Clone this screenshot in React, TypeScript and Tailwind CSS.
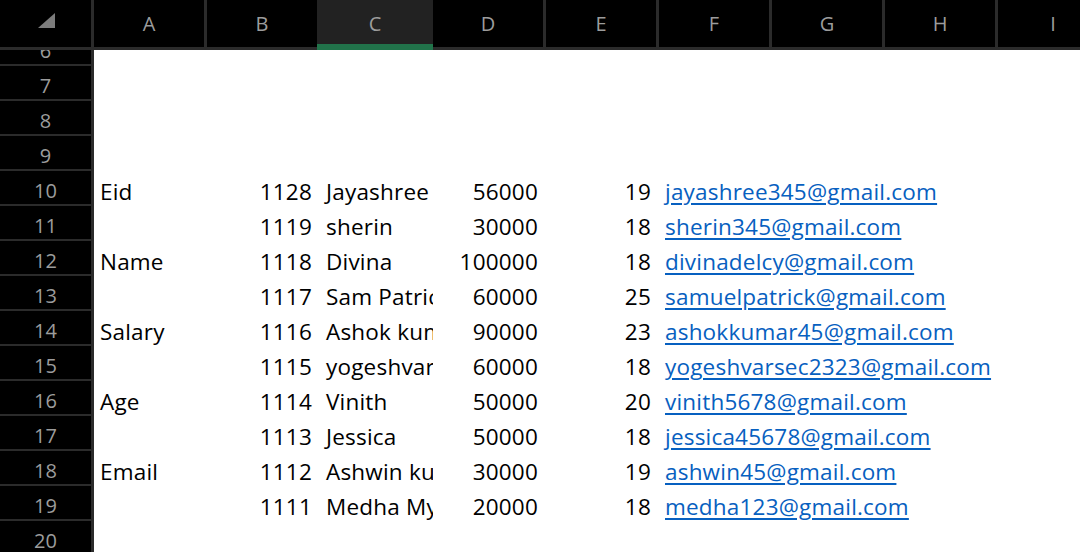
const columns = ["A", "B", "C", "D", "E", "F", "G", "H", "I"];

type Row = {
  n: number;
  label?: string;
  id?: string;
  name?: string;
  salary?: string;
  age?: string;
  email?: string;
};

const rows: Row[] = [
  { n: 6 },
  { n: 7 },
  { n: 8 },
  { n: 9 },
  { n: 10, label: "Eid", id: "1128", name: "Jayashree", salary: "56000", age: "19", email: "jayashree345@gmail.com" },
  { n: 11, id: "1119", name: "sherin", salary: "30000", age: "18", email: "sherin345@gmail.com" },
  { n: 12, label: "Name", id: "1118", name: "Divina", salary: "100000", age: "18", email: "divinadelcy@gmail.com" },
  { n: 13, id: "1117", name: "Sam Patrick", salary: "60000", age: "25", email: "samuelpatrick@gmail.com" },
  { n: 14, label: "Salary", id: "1116", name: "Ashok kumar", salary: "90000", age: "23", email: "ashokkumar45@gmail.com" },
  { n: 15, id: "1115", name: "yogeshvaran", salary: "60000", age: "18", email: "yogeshvarsec2323@gmail.com" },
  { n: 16, label: "Age", id: "1114", name: "Vinith", salary: "50000", age: "20", email: "vinith5678@gmail.com" },
  { n: 17, id: "1113", name: "Jessica", salary: "50000", age: "18", email: "jessica45678@gmail.com" },
  { n: 18, label: "Email", id: "1112", name: "Ashwin kumar", salary: "30000", age: "19", email: "ashwin45@gmail.com" },
  { n: 19, id: "1111", name: "Medha Mythili", salary: "20000", age: "18", email: "medha123@gmail.com" },
  { n: 20 },
];

const headFont = { fontFamily: '"Open Sans", "Noto Sans", sans-serif' };
const cellFont = { fontFamily: '"Open Sans", "Noto Sans", sans-serif' };

export default function App() {
  return (
    <div className="w-[1080px] h-[552px] overflow-hidden bg-white flex flex-col">
      {/* Column headers */}
      <div
        className="flex h-[50px] shrink-0 bg-black border-b-[3px] border-[#2b2b2b] text-[20px] text-[#9c9c9c]"
        style={headFont}
      >
        <div className="w-[94px] shrink-0 border-r-[3px] border-[#2b2b2b]">
          <svg width="91" height="47" viewBox="0 0 91 47">
            <polygon points="55,13 55,28 38,28" fill="#7c7c7c" />
          </svg>
        </div>
        {columns.map((c) => (
          <div
            key={c}
            className={`relative w-[113px] shrink-0 flex items-center justify-center border-r-[3px] ${
              c === "C" ? "bg-[#222222] border-[#222222]" : c === "B" ? "border-[#222222]" : "border-[#2b2b2b]"
            }`}
          >
            {c}
            {c === "C" && (
              <div className="absolute -left-[3px] right-[-3px] -bottom-[3px] h-[6px] bg-[#21734a]" />
            )}
          </div>
        ))}
      </div>

      {/* Rows */}
      <div className="flex-1 overflow-hidden">
        <div className="-mt-[19px] flex flex-col">
          {rows.map((r) => (
            <div key={r.n} className="flex h-[35px] shrink-0">
              <div
                className="w-[94px] shrink-0 bg-black border-r-[3px] border-b-2 border-[#2b2b2b] text-[20px] text-[#9c9c9c] flex justify-center pt-[7px] leading-[26px]"
                style={headFont}
              >
                {r.n}
              </div>
              <div
                className="flex text-[22.5px] tracking-[0.2px] text-black pt-[6px] leading-[29px] whitespace-nowrap"
                style={cellFont}
              >
                <div className="w-[113px] shrink-0 pl-[6px]">{r.label}</div>
                <div className="w-[113px] shrink-0 pr-[8px] text-right">{r.id}</div>
                <div className="w-[113px] shrink-0 pl-[6px] overflow-hidden">{r.name}</div>
                <div className="w-[113px] shrink-0 pr-[8px] text-right">{r.salary}</div>
                <div className="w-[113px] shrink-0 pr-[8px] text-right">{r.age}</div>
                <div className="w-[113px] shrink-0 pl-[6px] overflow-visible">
                  {r.email && (
                    <span className="text-[#0760c0] underline decoration-2 underline-offset-[3px]">
                      {r.email}
                    </span>
                  )}
                </div>
              </div>
            </div>
          ))}
        </div>
      </div>
    </div>
  );
}
